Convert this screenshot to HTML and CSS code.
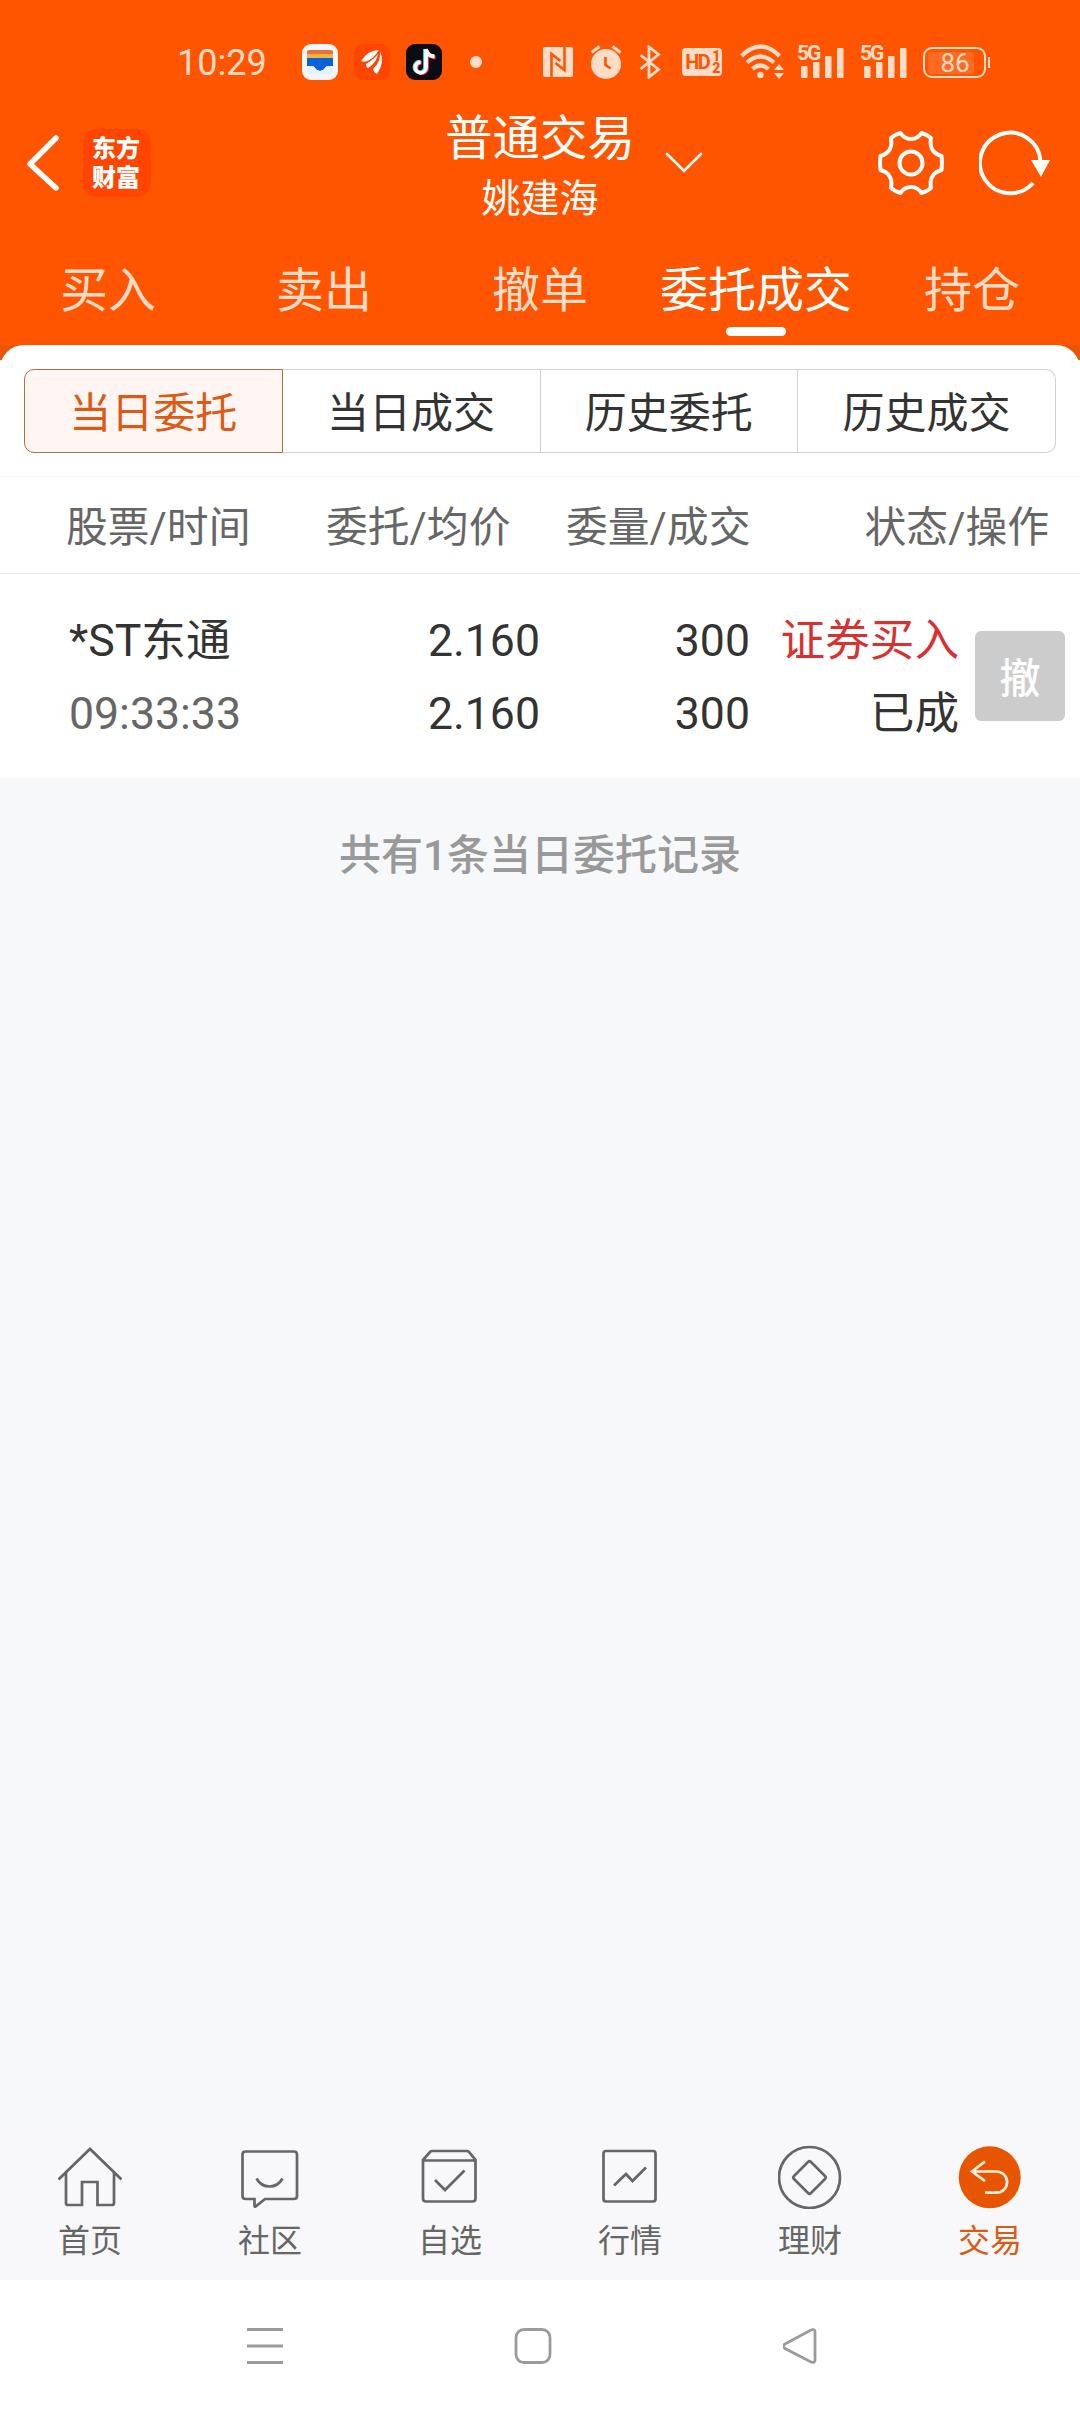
FILE: index.html
```html
<!DOCTYPE html>
<html lang="zh-CN">
<head>
  <meta charset="UTF-8" />
  <meta name="viewport" content="width=device-width, initial-scale=1.0" />
  <title>普通交易</title>
  <link rel="stylesheet" href="styles.css">
</head>
<body>
  <header class="header">
    <div class="status-bar">
      <span class="clock">10:29</span>
      <div class="status-apps">
        <svg width="36" height="36" viewBox="0 0 36 36">
          <rect width="36" height="36" rx="9" fill="#f4f6f8"/>
          <path d="M5 8q0-2 2-2h22q2 0 2 2v3H5z" fill="#e5743c"/>
          <path d="M5 10h26v4H5z" fill="#f7b23b"/>
          <path d="M5 14h26v8h-5q-2 0-3 2-2 3-5 3t-5-3q-1-2-3-2H5z" fill="#0a62d8"/>
          <path d="M5 22h5q2 0 3 2 2 3 5 3t5-3q1-2 3-2h5v6q0 2-2 2H7q-2 0-2-2z" fill="#e4f0fb"/>
        </svg>
        <svg width="36" height="36" viewBox="0 0 36 36">
          <rect width="36" height="36" rx="9" fill="#ff4500"/>
          <path d="M25 6Q14 6 7 17q5 2 9-1 6-4 9-10z" fill="#fff"/>
          <path d="M25 7Q21 15 12 20q0 3 2 4 9-5 11-17z" fill="#fff"/>
          <path d="M26 7q1 11-7 18 1 4 4 5 8-11 3-23z" fill="#fff"/>
          <path d="M25 7Q21 15 11 19M25 7q-1 13-9 18" fill="none" stroke="#ff4500" stroke-width="1.3"/>
        </svg>
        <svg width="36" height="36" viewBox="0 0 36 36">
          <rect width="36" height="36" rx="9" fill="#0d0b14"/>
          <g fill="none" stroke-width="3.8">
            <path d="M19 5v18a5.3 5.3 0 1 1-5.3-5.3M19 5q1 7 8.5 7.5" stroke="#38e1dc"/>
            <path d="M21 6v18a5.3 5.3 0 1 1-5.3-5.3M21 6q1 7 8.5 7.5" stroke="#f2365a"/>
            <path d="M20 5v18.5a5.3 5.3 0 1 1-5.3-5.3M20 5q1 7 8.5 7.5" stroke="#fff"/>
          </g>
        </svg>
      </div>
      <span class="status-dot"></span>
      <svg class="nfc" width="30" height="30" viewBox="0 0 30 30">
        <rect width="30" height="30" rx="2" fill="#ffdcc8"/>
        <path d="M8.500 30V7l9 7M21.500 0v23l-9-7" fill="none" stroke="#ff5500" stroke-width="2.6"/>
      </svg>
      <svg class="alarm" width="32" height="34" viewBox="0 0 32 34">
        <circle cx="16" cy="19" r="15" fill="#ffdcc8"/>
        <path d="M1.5 7.5l8-6M30.5 7.5l-8-6" stroke="#ffdcc8" stroke-width="3"/>
        <path d="M15.5 12v8l5 3.5" fill="none" stroke="#ff5500" stroke-width="2.6"/>
      </svg>
      <svg class="bluetooth" width="22" height="34" viewBox="0 0 22 34">
        <path d="M1.5 10l18 14.5-9.500 7.500V2l9.500 7.500L1.500 24" fill="none" stroke="#ffdcc8" stroke-width="2.8"/>
      </svg>
      <div class="hd-badge">
        <span>HD</span>
        <span class="hd-nums"><b>1</b><b>2</b></span>
      </div>
      <svg class="wifi" width="45" height="36" viewBox="0 0 45 36">
        <g fill="none" stroke="#ffdcc8" stroke-width="4.2">
          <path d="M1.5 12Q20.5-7 39.5 12"/>
          <path d="M7 18.5q13.5-12 27 0"/>
          <path d="M12.5 25q8-7 16 0"/>
        </g>
        <circle cx="20.5" cy="31" r="3.200" fill="#ffdcc8"/>
        <path d="M34 26l5-6 5 6zM34 29h10l-5 6z" fill="#ffdcc8"/>
      </svg>
      <div class="signal">
        <svg width="47" height="34" viewBox="0 0 47 34" fill="#ffdcc8">
          <rect x="4" y="21" width="6.5" height="12" rx="1"/>
          <rect x="16" y="17" width="6.5" height="16" rx="1"/>
          <rect x="28" y="11" width="6.5" height="22" rx="1"/>
          <rect x="40" y="3" width="6.5" height="30" rx="1"/>
        </svg>
        <span class="signal-net">5G</span>
      </div>
      <div class="signal">
        <svg width="47" height="34" viewBox="0 0 47 34" fill="#ffdcc8">
          <rect x="4" y="21" width="6.5" height="12" rx="1"/>
          <rect x="16" y="17" width="6.5" height="16" rx="1"/>
          <rect x="28" y="11" width="6.5" height="22" rx="1"/>
          <rect x="40" y="3" width="6.5" height="30" rx="1"/>
        </svg>
        <span class="signal-net">5G</span>
      </div>
      <div class="battery"><span>86</span></div>
      <span class="battery-tip"></span>
    </div>

    <div class="title-bar">
      <div class="title-left">
        <svg width="34" height="58" viewBox="0 0 34 58">
          <path d="M31 4L5 30l26 24" fill="none" stroke="#fff" stroke-width="5.5" stroke-linecap="round" stroke-linejoin="round"/>
        </svg>
        <div class="logo">东方<br>财富</div>
      </div>
      <div class="title-center">
        <h1>普通交易</h1>
        <p>姚建海</p>
      </div>
      <svg class="title-arrow" width="38" height="22" viewBox="0 0 38 22">
        <path d="M2 2l17 17L36 2" fill="none" stroke="#fff" stroke-width="2.6" stroke-linecap="round"/>
      </svg>
      <div class="title-right">
        <svg width="68" height="68" viewBox="0 0 68 68" fill="none" stroke="#fff" stroke-width="4" stroke-linejoin="round">
          <path d="M23.500 4C26 8 29 10 34 10s8-2 10.500-6Q50 5.500 54 9c-1.500 8 1 15.500 10.500 18q1 7 0 14C55 43.500 52.500 51 54 59q-4 3.500-9.500 5C42 60 39 58 34 58s-8 2-10.500 6Q18 62.500 14 59c1.500-8-1-15.500-10.500-18q-1-7 0-14C13 24.500 15.500 17 14 9q4-3.500 9.500-5z"/>
          <circle cx="34" cy="34" r="11.500"/>
        </svg>
        <svg width="72" height="68" viewBox="0 0 72 68">
          <path d="M54 54A30.300 30.300 0 1 1 61.500 32" fill="none" stroke="#fff" stroke-width="4"/>
          <path d="M52 31h19L62 48z" fill="#fff"/>
        </svg>
      </div>
    </div>

    <nav class="tabs">
      <a>买入</a>
      <a>卖出</a>
      <a>撤单</a>
      <a class="active">委托成交</a>
      <a>持仓</a>
    </nav>
  </header>

  <div class="panel-wrap">
    <main class="panel">
      <div class="segments">
        <button class="segment active">当日委托</button>
        <button class="segment">当日成交</button>
        <button class="segment">历史委托</button>
        <button class="segment">历史成交</button>
      </div>

      <div class="table-head">
        <span>股票/时间</span>
        <span>委托/均价</span>
        <span>委量/成交</span>
        <span class="last">状态/操作</span>
      </div>

      <div class="order">
        <div class="cell name">
          <div>*ST东通</div>
          <div class="muted">09:33:33</div>
        </div>
        <div class="cell price">
          <div>2.160</div>
          <div>2.160</div>
        </div>
        <div class="cell amount">
          <div>300</div>
          <div>300</div>
        </div>
        <div class="cell state">
          <div class="buy">证券买入</div>
          <div>已成</div>
        </div>
        <button class="cancel">撤</button>
      </div>
    </main>
  </div>

  <p class="summary">共有1条当日委托记录</p>

  <nav class="bottom-bar">
    <a>
      <svg viewBox="0 0 64 64">
        <path d="M.5 34.5L32 4l31.500 30.500M8 28v30q0 2 2 2h14V37h15.500v23H54q2 0 2-2V28"/>
      </svg>
      <span>首页</span>
    </a>
    <a>
      <svg viewBox="0 0 64 64">
        <path d="M7 6.500h49q3 0 3 3V51q0 3-3 3H27l-9.500 7.500q-1 .5-1-1V54H7.500q-3 0-3-3V9.500q0-3 3-3z"/>
        <path d="M18.500 33.500q4.500 8 13 8t13-8"/>
      </svg>
      <span>社区</span>
    </a>
    <a>
      <svg viewBox="0 0 64 64">
        <path d="M5 15l7-8q1-1 2-1h35q1 0 2 1l6.500 8v38.500q0 3-3 3H8q-3 0-3-3zM5 15.500h52M17 35l10 10 19.500-19.500"/>
      </svg>
      <span>自选</span>
    </a>
    <a>
      <svg viewBox="0 0 64 64">
        <rect x="5.500" y="6" width="52" height="50.500" rx="2.500"/>
        <path d="M16 40.500l12-11.500 6.500 7L48 22.500"/>
      </svg>
      <span>行情</span>
    </a>
    <a>
      <svg viewBox="0 0 64 64">
        <circle cx="31.500" cy="32.500" r="30.500"/>
        <path d="M30 17q1.500-1.500 3 0l14 14q1.500 1.500 0 3L33 48q-1.500 1.500-3 0L16 34q-1.500-1.500 0-3z"/>
      </svg>
      <span>理财</span>
    </a>
    <a class="active">
      <svg viewBox="0 0 64 64">
        <circle class="disc" cx="31.700" cy="32.300" r="31"/>
        <path class="arrow" d="M27 16.500l-13 10 13 9.500M14 26.500h24.500a10.600 10.600 0 0 1 0 21.200H27"/>
      </svg>
      <span>交易</span>
    </a>
  </nav>

  <div class="system-nav">
    <svg width="36" height="38" viewBox="0 0 36 38">
      <path d="M0 2.500h36M0 19h36M0 35.500h36"/>
    </svg>
    <svg width="38" height="38" viewBox="0 0 38 38">
      <rect x="2" y="2.500" width="34" height="33" rx="8"/>
    </svg>
    <svg width="36" height="38" viewBox="0 0 36 38">
      <path d="M2 17L28 3q4-1.500 4 2v28q0 3.500-4 2L2 21.500Q-1 19 2 17z"/>
    </svg>
  </div>
</body>
</html>
```

FILE: styles.css
```css
* {
  box-sizing: border-box;
}

body {
  margin: 0;
  width: 1080px;
  height: 2412px;
  overflow: hidden;
  display: flex;
  flex-direction: column;
  font-family: Roboto, "Noto Sans CJK SC", sans-serif;
  font-weight: 400;
  color: #333;
  background-color: #f7f8fa;
}

h1,
p {
  margin: 0;
  font-weight: 400;
}

svg {
  display: block;
  flex: none;
}

button {
  font-family: inherit;
  padding: 0;
  border: none;
}

.header {
  height: 345px;
  background-color: #ff5500;
  color: #fff;
}

/* status bar */
.status-bar {
  height: 104px;
  padding: 20px 0 0 177px;
  display: flex;
  align-items: center;
  color: #ffdcc8;
}

.clock {
  width: 125px;
  padding-top: 2px;
  font-size: 36px;
  line-height: 40px;
}

.status-apps {
  display: flex;
  gap: 16px;
}

.status-dot {
  width: 12px;
  height: 12px;
  margin-left: 28px;
  border-radius: 50%;
  background-color: #ffdcc8;
}

.nfc {
  margin-left: 61px;
}

.alarm {
  margin-left: 17px;
}

.bluetooth {
  margin-left: 17px;
}

.hd-badge {
  display: flex;
  align-items: center;
  justify-content: center;
  width: 40px;
  height: 28px;
  margin-left: 21px;
  border-radius: 4px;
  background-color: #ffdcc8;
  color: #ff5500;
  font: bold 20px/28px Roboto, sans-serif;
  letter-spacing: -1.5px;
}

.hd-nums {
  display: flex;
  flex-direction: column;
  margin-left: 3px;
  font-size: 14px;
  line-height: 12px;
}

.wifi {
  margin-left: 18px;
}

.signal {
  position: relative;
  margin-left: 12px;
}

.signal + .signal {
  margin-left: 16px;
}

.signal-net {
  position: absolute;
  left: 0;
  top: -2px;
  font-size: 21px;
  line-height: 20px;
  height: 18px;
  font-weight: 700;
  letter-spacing: -2px;
  background-color: #ff5500;
}

.battery {
  width: 63px;
  height: 31px;
  margin-left: 16px;
  padding: 3px;
  border: 2px solid #ffdcc8;
  border-radius: 9px;
  font-size: 26px;
  line-height: 22px;
  text-align: center;
}

.battery span {
  display: block;
  width: 46px;
  padding-left: 8px;
  border-radius: 4px;
  background-color: #ff6a20;
}

.battery-tip {
  width: 2px;
  height: 11px;
  margin-left: 2px;
  background-color: #ffdcc8;
}

/* title bar */
.title-bar {
  height: 130px;
  display: flex;
}

.title-left {
  display: flex;
  width: 445px;
  padding-left: 25px;
}

.title-left svg {
  margin-top: 30px;
}

.logo {
  width: 68px;
  height: 68px;
  margin: 25px 0 0 24px;
  padding: 6px 2px 0 0;
  border-radius: 14px;
  background-color: #ff4500;
  font-size: 24px;
  line-height: 29px;
  font-weight: 900;
  text-align: center;
}

.title-center {
  width: 190px;
  padding-top: 1px;
  text-align: center;
  white-space: nowrap;
}

.title-center h1 {
  font-size: 47.5px;
  line-height: 69px;
}

.title-center p {
  font-size: 39px;
  line-height: 50px;
}

.title-arrow {
  margin: 48px 0 0 30px;
}

.title-right {
  display: flex;
  gap: 34px;
  margin: 25px 0 0 174px;
}

/* trade tabs */
.tabs {
  display: flex;
  height: 111px;
}

.tabs a {
  flex: 1;
  display: flex;
  flex-direction: column;
  align-items: center;
  padding-top: 22px;
  font-size: 48px;
  line-height: 70px;
  color: #ffdcc8;
  white-space: nowrap;
}

.tabs .active {
  color: #fff;
}

.tabs .active::after {
  content: "";
  width: 60px;
  height: 9px;
  margin-top: 1px;
  border-radius: 5px;
  background-color: #fff;
}

/* order panel */
.panel-wrap {
  background: linear-gradient(#e85505 15px, #fff 15px);
}

.panel {
  height: 433px;
  padding-top: 24px;
  border-radius: 24px 24px 0 0;
  background-color: #fff;
}

.segments {
  display: flex;
  margin: 0 24px;
}

.segment {
  flex: 1;
  height: 84px;
  padding-bottom: 3px;
  border: 1px solid #d2d2d2;
  border-left-width: 0;
  background-color: #fff;
  font-size: 42px;
  color: #333;
}

.segment.active {
  border: 1px solid #b5703f;
  border-radius: 10px 0 0 10px;
  background-color: #fff6f3;
  color: #dc5a14;
}

.segment:last-child {
  border-radius: 0 10px 10px 0;
}

.table-head {
  display: flex;
  height: 98px;
  margin-top: 23px;
  padding: 0 31px 0 66px;
  border-top: 1px solid #f7f7f7;
  border-bottom: 1px solid #ebebeb;
  font-size: 41.8px;
  line-height: 101px;
  color: #666;
  white-space: nowrap;
}

.table-head span {
  width: 260px;
}

.table-head span:nth-child(2) {
  width: 240px;
}

.table-head .last {
  flex: 1;
  text-align: right;
}

.order {
  display: flex;
  padding: 31px 0 0 69px;
  font-size: 44.6px;
  line-height: 73px;
}

.cell {
  text-align: right;
  white-space: nowrap;
}

.cell.name {
  width: 231px;
  text-align: left;
}

.cell.price {
  width: 240px;
}

.cell.amount {
  width: 210px;
}

.cell.state {
  width: 209px;
}

.muted {
  color: #666;
}

.buy {
  color: #d93030;
}

.cancel {
  width: 90px;
  height: 90px;
  margin: 26px 0 0 16px;
  padding-bottom: 2px;
  border-radius: 6px;
  background-color: #ccc;
  color: #fff;
  font-size: 41px;
  font-weight: 500;
}

.summary {
  flex: 1;
  padding-top: 47px;
  font-size: 42px;
  line-height: 62px;
  font-weight: 500;
  text-align: center;
  color: #999;
}

/* bottom navigation */
.bottom-bar {
  display: flex;
  height: 160px;
  padding-top: 25px;
  background-color: #f8f8fa;
}

.bottom-bar a {
  flex: 1;
  display: flex;
  flex-direction: column;
  align-items: center;
  font-size: 32px;
  line-height: 65px;
  color: #666;
}

.bottom-bar svg {
  width: 64px;
  height: 64px;
  fill: none;
  stroke: #666;
  stroke-width: 2.7;
}

.bottom-bar .active {
  color: #dc5a14;
}

.bottom-bar .disc {
  fill: #e85500;
  stroke: none;
}

.bottom-bar .arrow {
  stroke: #fff0dc;
}

.system-nav {
  display: flex;
  gap: 231px;
  height: 132px;
  padding-left: 247px;
  align-items: center;
  background-color: #fff;
}

.system-nav svg {
  fill: none;
  stroke: #9b9b9b;
  stroke-width: 2.8;
}
```
